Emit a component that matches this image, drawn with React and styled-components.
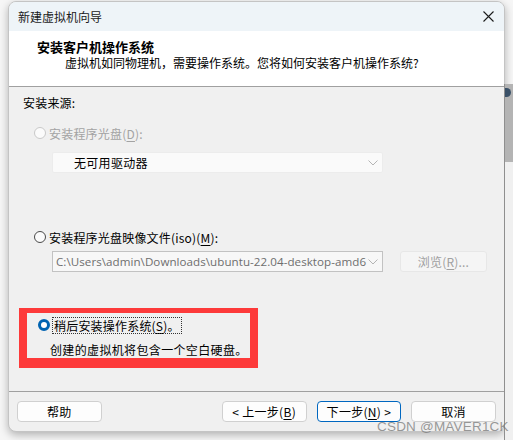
import React from "react";
import styled, { createGlobalStyle } from "styled-components";

const GlobalStyle = createGlobalStyle`
  html, body { margin: 0; padding: 0; }
  body {
    font-family: "Segoe UI", "Noto Sans CJK SC", "Noto Sans", sans-serif;
    font-size: 12px;
    color: #000;
    background: #f7f7f7;
  }
`;

const CJK = `"Noto Sans CJK SC", "Noto Sans", sans-serif`;

const Desktop = styled.div`
  position: relative;
  width: 513px;
  height: 440px;
  overflow: hidden;
  background: #f6f6f6;
`;

const BehindWindow = styled.div`
  position: absolute;
  right: 0;
  top: 84px;
  width: 8px;
  height: 356px;
  background: #f0f0f0;
  border-left: 1px solid #8f8f8f;

  &::before {
    content: "";
    position: absolute;
    left: 0;
    top: 0;
    width: 8px;
    height: 78px;
    background: #b4b4b4;
  }
  &::after {
    content: "";
    position: absolute;
    left: 0;
    top: 4px;
    width: 6px;
    height: 9px;
    border-radius: 0 5px 5px 0;
    background: #3a5168;
  }
`;

const Window = styled.div`
  margin: 1px 0 0 8px;
  width: 497px;
  height: 431px;
  display: flex;
  flex-direction: column;
  border-radius: 8px;
  overflow: hidden;
  background: #f0f0f0;
  border: 1px solid #c4c4c4;
  box-sizing: border-box;
  box-shadow: 0 3px 9px rgba(0, 0, 0, 0.28);
`;

const TitleBar = styled.div`
  height: 29px;
  flex: none;
  display: flex;
  align-items: center;
  justify-content: space-between;
  padding: 0 10px 0 9px;
  background: #eef4f8;
  font-family: ${CJK};
  font-size: 12px;
  color: #1a1a1a;
`;

const CloseIcon = () => (
  <svg width="11" height="11" viewBox="0 0 11 11">
    <path d="M0.5 0.5 L10.5 10.5 M10.5 0.5 L0.5 10.5" stroke="#1c1c1c" strokeWidth="1.1" fill="none" />
  </svg>
);

const Header = styled.div`
  height: 56px;
  flex: none;
  background: #fff;
  border-bottom: 1px solid #a0a0a0;
  box-sizing: border-box;
  padding: 8px 0 0 28px;
  font-family: ${CJK};
`;

const HeaderTitle = styled.div`
  font-size: 13px;
  font-weight: bold;
  line-height: 16px;
`;

const HeaderSub = styled.div`
  margin: 0 0 0 28px;
  font-size: 12px;
  letter-spacing: 0;
  line-height: 16px;
`;

const Body = styled.div`
  flex: 1;
  display: flex;
  flex-direction: column;
  padding: 8px 0 0 14px;
  font-family: ${CJK};
  font-size: 12px;
  letter-spacing: 0.2px;
`;

const Legend = styled.div`
  line-height: 16px;
`;

const RadioRow = styled.label`
  display: flex;
  align-items: center;
  gap: 3px;
  height: 16px;
  margin-left: 11px;
  margin-top: ${(p) => p.$top}px;
  color: ${(p) => (p.$disabled ? "#a3a3a3" : "#000")};
`;

const RadioDot = styled.span`
  width: 12px;
  height: 12px;
  box-sizing: border-box;
  border-radius: 50%;
  flex: none;
  background: ${(p) => (p.$checked ? "#fff" : "#fbfbfb")};
  border: ${(p) =>
    p.$checked ? "3.5px solid #0063b1" : p.$disabled ? "1px solid #c9c9c9" : "1px solid #4a4a4a"};
`;

const Focus = styled.span`
  outline: 1px dotted #333;
  outline-offset: 0;
  padding: 0 1px;
  line-height: 15px;
`;

const Key = styled.span`
  text-decoration: underline;
  text-underline-offset: 2px;
`;

const FieldRow = styled.div`
  display: flex;
  align-items: center;
  gap: 17px;
  margin: ${(p) => p.$top}px 0 0 29px;
`;

const Combo = styled.div`
  width: 331px;
  height: 21px;
  box-sizing: border-box;
  display: flex;
  align-items: center;
  justify-content: space-between;
  padding: 0 4px 0 ${(p) => (p.$disabled ? 21 : 3)}px;
  background: ${(p) => (p.$disabled ? "#fafafa" : "#f7f7f7")};
  border: 1px solid ${(p) => (p.$disabled ? "#ececec" : "#c2c2c2")};
  border-radius: ${(p) => (p.$disabled ? 2 : 0)}px;
`;

const ComboText = styled.span`
  flex: 1;
  overflow: hidden;
  white-space: nowrap;
  color: ${(p) => (p.$path ? "#6e6e6e" : "#000")};
  font-family: ${(p) => (p.$path ? `"Open Sans", "Noto Sans", sans-serif` : CJK)};
  font-size: ${(p) => (p.$path ? "11.6px" : "12px")};
  letter-spacing: ${(p) => (p.$path ? "0.05px" : "0.3px")};
`;

const Chevron = () => (
  <svg width="10" height="6" viewBox="0 0 10 6">
    <path d="M0.5 0.5 L5 5 L9.5 0.5" stroke="#b4b4b4" strokeWidth="1" fill="none" />
  </svg>
);

const BrowseButton = styled.div`
  width: 87px;
  height: 21px;
  box-sizing: border-box;
  display: flex;
  align-items: center;
  justify-content: center;
  background: #f5f5f5;
  border: 1px solid #e7e7e7;
  border-radius: 3px;
  color: #a0a0a0;
`;

const Highlight = styled.div`
  width: 239px;
  height: 60px;
  box-sizing: border-box;
  margin: 36px 0 0 -4px;
  border-style: solid;
  border-color: #fd3a3a;
  border-width: 5px 8px 10px 8px;
  display: flex;
  flex-direction: column;
`;

const Note = styled.div`
  margin: 9px 0 0 23px;
  line-height: 16px;
  letter-spacing: 0.35px;
`;

const Footer = styled.div`
  flex: none;
  height: 40px;
  box-sizing: border-box;
  border-top: 1px solid #a0a0a0;
  display: flex;
  align-items: flex-start;
  padding: 9px 8px 0 8px;
  gap: 10px;
`;

const Button = styled.div`
  width: 85px;
  height: 21px;
  box-sizing: border-box;
  display: flex;
  align-items: center;
  justify-content: center;
  background: #fdfdfd;
  border: 1px solid ${(p) => (p.$primary ? "#0067c0" : "#d0d0d0")};
  border-radius: 4px;
  font-family: ${CJK};
  font-size: 12px;
  letter-spacing: 0.3px;
  margin-left: ${(p) => p.$push || 0}px;
`;

const Watermark = styled.div`
  position: absolute;
  left: 377px;
  top: 419px;
  font-family: "Liberation Sans", Arial, sans-serif;
  font-size: 13.5px;
  color: rgba(120, 120, 120, 0.75);
  letter-spacing: 0.2px;
`;

export default function App() {
  return (
    <>
      <GlobalStyle />
      <Desktop>
        <BehindWindow />
        <Window>
          <TitleBar>
            <span>新建虚拟机向导</span>
            <CloseIcon />
          </TitleBar>
          <Header>
            <HeaderTitle>安装客户机操作系统</HeaderTitle>
            <HeaderSub>虚拟机如同物理机，需要操作系统。您将如何安装客户机操作系统?</HeaderSub>
          </Header>
          <Body>
            <Legend>安装来源:</Legend>
            <RadioRow $top={14} $disabled>
              <RadioDot $disabled />
              <span>
                安装程序光盘(<Key>D</Key>):
              </span>
            </RadioRow>
            <FieldRow $top={11}>
              <Combo $disabled>
                <ComboText>无可用驱动器</ComboText>
                <Chevron />
              </Combo>
            </FieldRow>
            <RadioRow $top={56}>
              <RadioDot />
              <span>
                安装程序光盘映像文件(iso)(<Key>M</Key>):
              </span>
            </RadioRow>
            <FieldRow $top={6}>
              <Combo>
                <ComboText $path>C:\Users\admin\Downloads\ubuntu-22.04-desktop-amd6</ComboText>
                <Chevron />
              </Combo>
              <BrowseButton>
                浏览(<Key>R</Key>)...
              </BrowseButton>
            </FieldRow>
            <Highlight>
              <RadioRow $top={4}>
                <RadioDot $checked />
                <Focus>
                  稍后安装操作系统(<Key>S</Key>)。
                </Focus>
              </RadioRow>
              <Note>创建的虚拟机将包含一个空白硬盘。</Note>
            </Highlight>
          </Body>
          <Footer>
            <Button>帮助</Button>
            <Button $push={110}>
              &lt; 上一步(<Key>B</Key>)
            </Button>
            <Button $primary>
              下一步(<Key>N</Key>) &gt;
            </Button>
            <Button>取消</Button>
          </Footer>
        </Window>
        <Watermark>CSDN @MAVER1CK</Watermark>
      </Desktop>
    </>
  );
}
